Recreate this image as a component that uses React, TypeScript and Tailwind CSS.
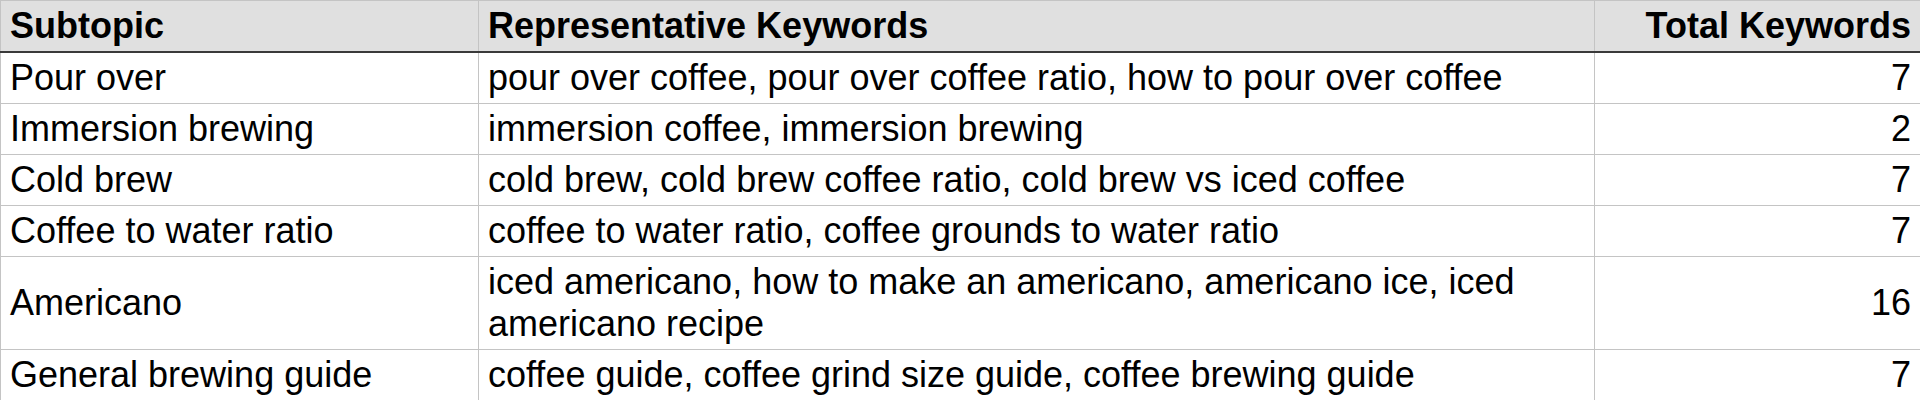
const rows = [
  { subtopic: 'Pour over', keywords: 'pour over coffee, pour over coffee ratio, how to pour over coffee', total: 7 },
  { subtopic: 'Immersion brewing', keywords: 'immersion coffee, immersion brewing', total: 2 },
  { subtopic: 'Cold brew', keywords: 'cold brew, cold brew coffee ratio, cold brew vs iced coffee', total: 7 },
  { subtopic: 'Coffee to water ratio', keywords: 'coffee to water ratio, coffee grounds to water ratio', total: 7 },
  { subtopic: 'Americano', keywords: 'iced americano, how to make an americano, americano ice, iced americano recipe', total: 16 },
  { subtopic: 'General brewing guide', keywords: 'coffee guide, coffee grind size guide, coffee brewing guide', total: 7 },
];

export default function App() {
  const cell = 'border border-[#c4c4c4] px-[9px] py-[4px] align-middle';

  return (
    <div className="w-[1920px] h-[400px] bg-white overflow-hidden">
      <table
        className="w-[1920px] table-fixed border-collapse text-[36px] leading-[42px] text-black"
        style={{ fontFamily: '"Liberation Sans", Arial, sans-serif' }}
      >
        <colgroup>
          <col className="w-[478px]" />
          <col className="w-[1116px]" />
          <col className="w-[326px]" />
        </colgroup>
        <thead>
          <tr className="bg-[#e0e0e0] font-bold">
            <th className={`${cell} text-left border-b-2 border-b-[#3a3a3a]`}>Subtopic</th>
            <th className={`${cell} text-left border-b-2 border-b-[#3a3a3a]`}>Representative Keywords</th>
            <th className={`${cell} text-right border-b-2 border-b-[#3a3a3a]`}>Total Keywords</th>
          </tr>
        </thead>
        <tbody>
          {rows.map(r => (
            <tr key={r.subtopic}>
              <td className={`${cell} text-left`}>{r.subtopic}</td>
              <td className={`${cell} text-left`}>{r.keywords}</td>
              <td className={`${cell} text-right`}>{r.total}</td>
            </tr>
          ))}
        </tbody>
      </table>
    </div>
  );
}
